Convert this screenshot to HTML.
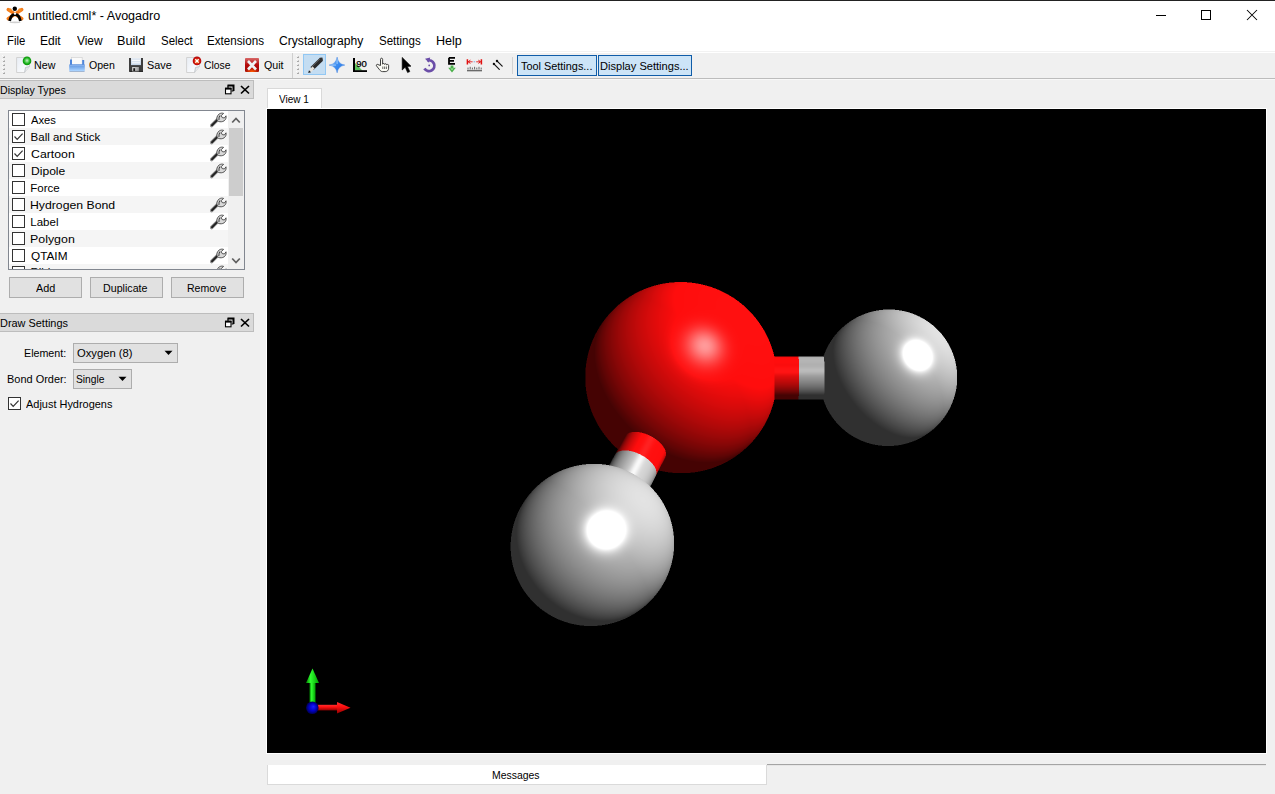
<!DOCTYPE html>
<html><head><meta charset="utf-8">
<style>
html,body{margin:0;padding:0;}
body{width:1275px;height:794px;position:relative;overflow:hidden;background:#f0f0f0;font-family:"Liberation Sans",sans-serif;color:#000;}
.a{position:absolute;}
svg.a{overflow:visible;}
.t{position:absolute;white-space:nowrap;font-size:12px;line-height:14px;transform-origin:0 0;color:#000;}
.cb{width:11px;height:11px;border:1px solid #333;background:#fff;}
.btn{position:absolute;background:#e1e1e1;border:1px solid #adadad;box-sizing:border-box;}
</style></head><body>
<svg width="0" height="0" style="position:absolute">
<defs>
<linearGradient id="wh" x1="0" y1="0" x2="1" y2="1">
<stop offset="0" stop-color="#3a3a3a"/><stop offset="1" stop-color="#111"/>
</linearGradient>
<symbol id="wrench" viewBox="0 0 17 17">
<path d="M1.6 14.6 L8.2 8.0" stroke="#9a9a9a" stroke-width="3.6" stroke-linecap="round"/>
<path d="M2.0 14.2 L7.6 8.6" stroke="#222" stroke-width="2.0" stroke-linecap="round"/>
<path d="M7.3 9.6 C6.2 7.6 7.0 4.4 9.2 3.0 C10.6 2.0 12.4 1.9 13.6 2.4 L11.2 4.6 L12.2 6.6 L14.4 7.0 L16.0 4.8 C16.4 6.6 15.8 8.6 14.2 9.8 C12.4 11.0 10.0 11.0 8.6 10.4 Z" fill="#d8d8d8" stroke="#444" stroke-width="0.9"/>
<path d="M9.0 8.8 C8.6 7.4 9.0 5.6 10.2 4.6" stroke="#333" stroke-width="1.1" fill="none"/>
</symbol>
</defs>
</svg>

<!-- ===== title bar ===== -->
<div class="a" style="left:0;top:0;width:1275px;height:1px;background:#222"></div>
<div class="a" style="left:0;top:1px;width:1275px;height:52px;background:#fff"></div>
<svg class="a" style="left:4px;top:4px" width="22" height="22" viewBox="4 4 22 22">
<ellipse cx="15" cy="22.3" rx="5.5" ry="0.9" fill="#d0d0d0"/>
<path d="M8.2 9.6 L21.8 18.6 M21.8 9.6 L8.2 18.6" stroke="#f47a1a" stroke-width="3.4" stroke-linecap="round"/>
<circle cx="10" cy="10" r="1.8" fill="#f68a20"/><circle cx="20" cy="10" r="1.8" fill="#f68a20"/>
<path d="M9.6 21 Q10.8 14.6 15 14.4 Q19.2 14.6 20.4 21" stroke="#000" stroke-width="2.8" fill="none"/>
<circle cx="14.8" cy="8.8" r="2.2" fill="#000"/>
<circle cx="15" cy="13.6" r="1.2" fill="#fff"/>
</svg>
<div class="a" style="left:1156px;top:15px;width:10px;height:1px;background:#000"></div>
<div class="a" style="left:1201px;top:10px;width:8px;height:8px;border:1px solid #000"></div>
<svg class="a" style="left:1246px;top:9px" width="12" height="12" viewBox="0 0 12 12"><path d="M1 1L11 11M11 1L1 11" stroke="#000" stroke-width="1.05"/></svg>

<!-- ===== toolbar ===== -->
<div class="a" style="left:0;top:51px;width:1275px;height:1px;background:#f2f2f2"></div>
<div class="a" style="left:0;top:53px;width:1275px;height:25px;background:#f0f0f0"></div>
<div class="a" style="left:0;top:78px;width:1275px;height:1px;background:#bcbcbc"></div>
<div class="a" style="left:0;top:79px;width:1275px;height:1px;background:#f8f8f8"></div>
<!-- grips -->
<svg class="a" style="left:2px;top:54px" width="5" height="21" viewBox="2 54 5 21"><path d="M3 58 L5 56 L5 58 Z" fill="#9c9c9c"/><rect x="3" y="57" width="2" height="1" fill="#a8a8a8"/><rect x="2" y="55" width="1" height="1" fill="#fff" opacity="0.7"/><path d="M3 62 L5 60 L5 62 Z" fill="#9c9c9c"/><rect x="3" y="61" width="2" height="1" fill="#a8a8a8"/><rect x="2" y="59" width="1" height="1" fill="#fff" opacity="0.7"/><path d="M3 66 L5 64 L5 66 Z" fill="#9c9c9c"/><rect x="3" y="65" width="2" height="1" fill="#a8a8a8"/><rect x="2" y="63" width="1" height="1" fill="#fff" opacity="0.7"/><path d="M3 70 L5 68 L5 70 Z" fill="#9c9c9c"/><rect x="3" y="69" width="2" height="1" fill="#a8a8a8"/><rect x="2" y="67" width="1" height="1" fill="#fff" opacity="0.7"/><path d="M3 74 L5 72 L5 74 Z" fill="#9c9c9c"/><rect x="3" y="73" width="2" height="1" fill="#a8a8a8"/><rect x="2" y="71" width="1" height="1" fill="#fff" opacity="0.7"/></svg>
<svg class="a" style="left:296px;top:54px" width="5" height="21" viewBox="296 54 5 21"><path d="M297 58 L299 56 L299 58 Z" fill="#9c9c9c"/><rect x="297" y="57" width="2" height="1" fill="#a8a8a8"/><rect x="296" y="55" width="1" height="1" fill="#fff" opacity="0.7"/><path d="M297 62 L299 60 L299 62 Z" fill="#9c9c9c"/><rect x="297" y="61" width="2" height="1" fill="#a8a8a8"/><rect x="296" y="59" width="1" height="1" fill="#fff" opacity="0.7"/><path d="M297 66 L299 64 L299 66 Z" fill="#9c9c9c"/><rect x="297" y="65" width="2" height="1" fill="#a8a8a8"/><rect x="296" y="63" width="1" height="1" fill="#fff" opacity="0.7"/><path d="M297 70 L299 68 L299 70 Z" fill="#9c9c9c"/><rect x="297" y="69" width="2" height="1" fill="#a8a8a8"/><rect x="296" y="67" width="1" height="1" fill="#fff" opacity="0.7"/><path d="M297 74 L299 72 L299 74 Z" fill="#9c9c9c"/><rect x="297" y="73" width="2" height="1" fill="#a8a8a8"/><rect x="296" y="71" width="1" height="1" fill="#fff" opacity="0.7"/></svg>
<div class="a" style="left:292px;top:53px;width:1px;height:25px;background:#cfcfcf"></div>
<!-- New -->
<svg class="a" style="left:12px;top:54px" width="22" height="22" viewBox="12 54 22 22">
<defs><linearGradient id="pap" x1="0" y1="0" x2="1" y2="1"><stop offset="0" stop-color="#e8edf5"/><stop offset="1" stop-color="#ffffff"/></linearGradient>
<radialGradient id="grn" cx="0.5" cy="0.5" r="0.5" fx="0.5" fy="0.45"><stop offset="0" stop-color="#d0ecd0"/><stop offset="0.35" stop-color="#6ad46a"/><stop offset="0.7" stop-color="#18b018"/><stop offset="1" stop-color="#0a900a"/></radialGradient></defs>
<path d="M16.6 57.5 H29.5 V66.5 L24.6 72.5 H16.6 Z" fill="url(#pap)" stroke="#cfcfcf" stroke-width="0.9"/>
<path d="M29.5 66.5 L25.5 67.5 L24.6 72.5" fill="#e4e6ea" stroke="#b8bcc2" stroke-width="0.8"/>
<circle cx="27" cy="60.9" r="4.3" fill="url(#grn)"/>
</svg>
<!-- Open -->
<svg class="a" style="left:66px;top:54px" width="22" height="22" viewBox="66 54 22 22">
<defs><linearGradient id="tray" x1="0" y1="0" x2="0" y2="1"><stop offset="0" stop-color="#5b8fdc"/><stop offset="0.45" stop-color="#7fb0ee"/><stop offset="0.85" stop-color="#a9d2ff"/><stop offset="1" stop-color="#7d93b5"/></linearGradient></defs>
<rect x="71.6" y="57.4" width="10.6" height="8" fill="#fafafa" stroke="#d2d2d2" stroke-width="0.7"/>
<rect x="70" y="59.5" width="2" height="6" fill="#4f86da"/>
<rect x="82.2" y="60" width="2" height="5.5" fill="#4f86da"/>
<rect x="69.2" y="64.2" width="15.6" height="7.6" rx="0.8" fill="url(#tray)"/>
<rect x="69.6" y="65.2" width="14.8" height="0.8" fill="#9cc2f2" opacity="0.7"/>
</svg>
<!-- Save -->
<svg class="a" style="left:125px;top:54px" width="22" height="22" viewBox="125 54 22 22">
<defs><linearGradient id="lbl" x1="0" y1="0" x2="0" y2="1"><stop offset="0" stop-color="#e6ecf4"/><stop offset="1" stop-color="#c4d4e6"/></linearGradient>
<linearGradient id="shut" x1="0" y1="0" x2="1" y2="0"><stop offset="0" stop-color="#e0e0e0"/><stop offset="1" stop-color="#9a9a9a"/></linearGradient></defs>
<path d="M129 57.9 H143 V72 H130 L129 71 Z" fill="#3e3e3e"/>
<rect x="131" y="58" width="10" height="7.1" fill="url(#lbl)"/>
<rect x="132" y="60.2" width="8" height="0.9" fill="#fff"/>
<rect x="132" y="62.4" width="8" height="0.9" fill="#fff"/>
<rect x="132.2" y="67" width="6.7" height="5" fill="url(#shut)"/>
<rect x="133.3" y="68.2" width="1.8" height="2.8" fill="#151515"/>
<rect x="129" y="70.8" width="14" height="1.2" fill="#1c1c1c" opacity="0.6"/>
</svg>
<!-- Close -->
<svg class="a" style="left:182px;top:54px" width="22" height="22" viewBox="182 54 22 22">
<defs><radialGradient id="rdc" cx="0.5" cy="0.5" r="0.5" fx="0.5" fy="0.6"><stop offset="0" stop-color="#ffb040"/><stop offset="0.45" stop-color="#e04010"/><stop offset="0.8" stop-color="#c80c0c"/><stop offset="1" stop-color="#a80808"/></radialGradient></defs>
<path d="M186.6 57.5 H199.5 V66.5 L194.6 72.5 H186.6 Z" fill="url(#pap)" stroke="#cfcfcf" stroke-width="0.9"/>
<path d="M199.5 66.5 L195.5 67.5 L194.6 72.5" fill="#e4e6ea" stroke="#b8bcc2" stroke-width="0.8"/>
<circle cx="197" cy="60.9" r="4.3" fill="url(#rdc)"/>
<path d="M195.3 59.2 L198.7 62.6 M198.7 59.2 L195.3 62.6" stroke="#fff" stroke-width="1.3"/>
</svg>
<!-- Quit -->
<svg class="a" style="left:241px;top:54px" width="22" height="22" viewBox="241 54 22 22">
<defs><linearGradient id="qt" x1="0" y1="0" x2="0" y2="1"><stop offset="0" stop-color="#d86a6a"/><stop offset="0.5" stop-color="#b40a0a"/><stop offset="1" stop-color="#a00808"/></linearGradient>
<radialGradient id="qo" cx="0.5" cy="0.95" r="0.5"><stop offset="0" stop-color="#ff5a00"/><stop offset="1" stop-color="#ff5a00" stop-opacity="0"/></radialGradient></defs>
<rect x="245" y="57.9" width="14" height="14" rx="0.8" fill="url(#qt)"/>
<rect x="245" y="64" width="14" height="8" fill="url(#qo)"/>
<path d="M248 61 L256 69.5 M256 61 L248 69.5" stroke="#eef2f4" stroke-width="2.6"/>
</svg>
<!-- pencil highlighted button -->
<div class="a" style="left:303px;top:54px;width:21px;height:19px;background:#c4ddf2;border:1px solid #92c8f4"></div>
<svg class="a" style="left:303px;top:54px" width="24" height="22" viewBox="303 54 24 22">
<path d="M312 68.6 L321.2 59.4" stroke="#2a2a2a" stroke-width="4.2"/>
<path d="M311.2 67.6 L320.4 58.4" stroke="#666" stroke-width="0.9"/>
<path d="M309 70.2 L312.6 66.6 L314.6 68.6 L311 72.2 Z" fill="#e6e2dc"/>
<path d="M308.2 73 L309 70.2 L311 72.2 Z" fill="#1a1a1a"/>
<path d="M319.6 57.8 L322.4 57.6 L323 60.4 L321 62 Z" fill="#333"/>
</svg>
<!-- star -->
<svg class="a" style="left:326px;top:54px" width="22" height="22" viewBox="326 54 22 22">
<defs><linearGradient id="stg" x1="0" y1="0" x2="1" y2="1"><stop offset="0" stop-color="#9fd0ff"/><stop offset="0.5" stop-color="#3d8df0"/><stop offset="1" stop-color="#1f6ee0"/></linearGradient></defs>
<path d="M337.1 57 Q338.1 64.1 344.9 65.1 Q338.1 66.1 337.1 72.9 Q336.1 66.1 329 65.1 Q336.1 64.1 337.1 57 Z" fill="url(#stg)" stroke="#3a7fe0" stroke-width="0.4"/>
<path d="M331.5 65.1 H336 M337.1 59.5 V64" stroke="#c0e0ff" stroke-width="0.9" opacity="0.8"/>
</svg>
<!-- 90 angle -->
<svg class="a" style="left:350px;top:54px" width="20" height="22" viewBox="350 54 20 22">
<path d="M354.6 62.6 L354.6 70.4 L362.4 70.4 Z" fill="#5cc25c"/>
<rect x="353" y="58" width="2" height="14" fill="#000"/>
<rect x="353" y="70.2" width="14" height="1.8" fill="#000"/>
<text x="356.2" y="67.4" font-family="Liberation Sans" font-size="9" fill="#000" stroke="#000" stroke-width="0.25" textLength="10.6" lengthAdjust="spacingAndGlyphs">90</text>
</svg>
<!-- hand -->
<svg class="a" style="left:374px;top:56px" width="18" height="18" viewBox="374 56 18 18">
<path d="M380.5 65.5 V59.3 C380.5 57.8 382.6 57.8 382.6 59.3 V64.2 C382.8 63.2 384.6 63.2 384.6 64.4 C384.8 63.5 386.6 63.5 386.6 64.8 C386.8 64.2 388.6 64.2 388.6 65.4 V68.2 C388.6 70.4 387.2 71.6 385.2 71.6 H382.4 C381.2 71.6 380.4 70.8 379.6 69.8 L376.6 66 C375.8 65 377 63.8 378 64.6 Z" fill="#fbfbf4" stroke="#2a2a2a" stroke-width="0.9"/>
<path d="M382.8 66.5 V69 M384.6 66.5 V69 M386.4 66.5 V69" stroke="#555" stroke-width="0.9"/>
</svg>
<!-- arrow -->
<svg class="a" style="left:398px;top:54px" width="16" height="22" viewBox="398 54 16 22">
<path d="M402.2 57.4 V70 L405.2 67.2 L407.6 72.6 L409.8 71.6 L407.4 66.4 L411 66.2 Z" fill="#000" stroke="#000" stroke-width="0.6" stroke-linejoin="round"/>
</svg>
<!-- rotate -->
<svg class="a" style="left:420px;top:54px" width="20" height="22" viewBox="420 54 20 22">
<path d="M427.2 60.6 A5.4 5.4 0 1 1 424.4 68.6" stroke="#6b4ea8" stroke-width="2.8" fill="none"/>
<path d="M425 58.8 L430.2 57.4 L429 62.8 Z" fill="#6b4ea8"/>
<circle cx="429.2" cy="65.4" r="0.9" fill="#6b4ea8"/>
</svg>
<!-- E arrow -->
<svg class="a" style="left:444px;top:54px" width="16" height="22" viewBox="444 54 16 22">
<path d="M449 57.8 H455 M449 57.8 V63.8 H455 M449 60.8 H454" stroke="#000" stroke-width="1.8" fill="none"/>
<path d="M450.6 65.4 H453.4 V67.8 H455.8 L452 72.4 L448.2 67.8 H450.6 Z" fill="#4ab04a"/>
<path d="M451 68.2 L452 69.8 L453 68.2" fill="none" stroke="#a8e8a8" stroke-width="0.9"/>
</svg>
<!-- measure -->
<svg class="a" style="left:464px;top:56px" width="20" height="18" viewBox="464 56 20 18">
<path d="M467.4 59.2 V64.4 M481.4 59.2 V64.4" stroke="#e01010" stroke-width="1.5"/>
<path d="M468.2 61.8 H472.6 M476.2 61.8 H480.6" stroke="#e43030" stroke-width="1"/>
<path d="M468.2 61.8 L470.4 60.2 M468.2 61.8 L470.4 63.4 M480.6 61.8 L478.4 60.2 M480.6 61.8 L478.4 63.4" stroke="#e01010" stroke-width="1"/>
<path d="M473.6 61.8 H475.2" stroke="#8aa0d8" stroke-width="1"/>
<path d="M467 70.6 H482" stroke="#6a6a6a" stroke-width="1.5"/>
<path d="M468 69.4 V67.6 M470.2 69.4 V66.8 M472.4 69.4 V67.6 M474.6 69.4 V66.8 M476.8 69.4 V67.6 M479 69.4 V66.8 M481.2 69.4 V67.6" stroke="#555" stroke-width="0.9"/>
</svg>
<!-- double line -->
<svg class="a" style="left:488px;top:56px" width="18" height="18" viewBox="488 56 18 18">
<path d="M493.6 63.6 L499.3 69.4 M496.7 60.7 L502.2 66.2" stroke="#151515" stroke-width="1.2" stroke-linecap="round"/>
<path d="M493.2 63.2 L494.6 64.6 M496.3 60.3 L497.7 61.7" stroke="#000" stroke-width="2"/>
</svg>
<div class="a" style="left:512px;top:57px;width:1px;height:17px;background:#d2d2d2"></div>
<!-- settings buttons -->
<div class="a" style="left:517px;top:55px;width:78px;height:19px;background:#cce4f7;border:1px solid #0f5ca8"></div>
<div class="a" style="left:598px;top:55px;width:92px;height:19px;background:#cce4f7;border:1px solid #0f5ca8"></div>

<!-- ===== central tab widget ===== -->
<div class="a" style="left:267px;top:88px;width:53px;height:21px;background:#fff;border:1px solid #d9d9d9;border-bottom:none"></div>
<div class="a" style="left:266px;top:108px;width:1001px;height:646px;background:#fff"></div>
<div class="a" style="left:267px;top:109px;width:999px;height:644px;background:#000;overflow:hidden">
<svg class="a" style="left:0;top:0" width="999" height="644" viewBox="267 109 999 644">
<defs>
<radialGradient id="gO" cx="0.68" cy="0.28" r="0.95" fx="0.62" fy="0.32"><stop offset="0" stop-color="#ff9a9a"/><stop offset="0.09" stop-color="#ff3030"/><stop offset="0.38" stop-color="#ff1010"/><stop offset="0.62" stop-color="#c00808"/><stop offset="0.85" stop-color="#4a0000"/><stop offset="1" stop-color="#300000"/></radialGradient>
<radialGradient id="gH1" cx="0.74" cy="0.3" r="0.95" fx="0.72" fy="0.34"><stop offset="0" stop-color="#fff"/><stop offset="0.1" stop-color="#f0f0f0"/><stop offset="0.22" stop-color="#c0c0c0"/><stop offset="0.55" stop-color="#9a9a9a"/><stop offset="0.8" stop-color="#3a3a3a"/><stop offset="1" stop-color="#222"/></radialGradient>
<radialGradient id="gH2" cx="0.62" cy="0.36" r="0.9" fx="0.57" fy="0.41"><stop offset="0" stop-color="#fff"/><stop offset="0.1" stop-color="#f4f4f4"/><stop offset="0.22" stop-color="#c8c8c8"/><stop offset="0.6" stop-color="#b0b0b0"/><stop offset="0.85" stop-color="#606060"/><stop offset="1" stop-color="#404040"/></radialGradient>
<linearGradient id="bR" x1="0" y1="0" x2="0" y2="1"><stop offset="0" stop-color="#d80a0a"/><stop offset="0.3" stop-color="#ff2020"/><stop offset="0.6" stop-color="#b00808"/><stop offset="1" stop-color="#200000"/></linearGradient>
<linearGradient id="bG" x1="0" y1="0" x2="0" y2="1"><stop offset="0" stop-color="#a8a8a8"/><stop offset="0.3" stop-color="#c8c8c8"/><stop offset="0.6" stop-color="#8a8a8a"/><stop offset="1" stop-color="#282828"/></linearGradient>
</defs>
<rect x="760" y="358" width="38" height="42" fill="url(#bR)"/><rect x="798" y="358" width="30" height="42" fill="url(#bG)"/>
<circle cx="681.8" cy="378.1" r="95" fill="url(#gO)"/>
<circle cx="888" cy="378" r="68" fill="url(#gH1)"/>
<g transform="rotate(28.3 642 452)"><rect x="621" y="434" width="42" height="22" fill="url(#bR)"/><rect x="621" y="455" width="42" height="30" fill="url(#bG)"/><ellipse cx="642" cy="434" rx="21" ry="5" fill="#ff1a1a"/></g>
<circle cx="592" cy="544.7" r="81" fill="url(#gH2)"/>
</svg>
<canvas id="mol" class="a" style="left:0;top:0" width="999" height="644"></canvas>
<script>
(function(){
var P={"amb": 0.27, "kd": 0.85, "kd2": 0.3, "L2": [0.8, -0.7, -0.5], "spec": 1.5, "shin": 60, "gr": 0.7, "s2": 1.14, "s1": 1.0, "cr": 21.3, "rH2": 80.3};
function g(k,def){return (P[k]!==undefined)?P[k]:def;}
var W=999,H=644,OX=267,OY=109;
var cv=document.getElementById('mol'); var ctx=cv.getContext('2d');
var img=ctx.createImageData(W,H); var d=img.data;
function nrm(v){var l=Math.hypot(v[0],v[1],v[2]);return [v[0]/l,v[1]/l,v[2]/l];}
function dot(a,b){return a[0]*b[0]+a[1]*b[1]+a[2]*b[2];}
var gr=g('gr',0.75);
var RED=g('red',[1.0,0.05,0.05]), GRY=[gr,gr,gr];
var L1=nrm(g('L1',[0.8,-0.7,1.0])), L2=nrm(g('L2',[-0.8,0.7,-0.5]));
var HV=nrm([L1[0],L1[1],L1[2]+1]);
var AMB=g('amb',0.2),KD=g('kd',0.8),KD2=g('kd2',0.3),SPEC=g('spec',1.0),SHIN=g('shin',50);
var D=g('D',1000), CX=766.5, CY=431;
var E=[CX,CY,D];
function place(px,py,r,s){var z=D*(1-1/s); return {c:[CX+(px-CX)/s, CY+(py-CY)/s, z], r:r/s};}
var sO=place(681.8,378.1,95,1.0), sH1=place(888,378,68,g('s1',0.969)), sH2=place(593.5,544.2,g("rH2",80.5),g("s2",1.154));
sO.col=RED; sH1.col=GRY; sH2.col=GRY;
var spheres=[sO,sH1,sH2];
function mkcyl(a,b,r){
  var p0=a.c,p1=b.c; var ax=[p1[0]-p0[0],p1[1]-p0[1],p1[2]-p0[2]]; var L=Math.hypot(ax[0],ax[1],ax[2]); ax=[ax[0]/L,ax[1]/L,ax[2]/L];
  var split=a.r+(L-a.r-b.r)/2;
  return {p0:p0,a:ax,L:L,r:r,split:split,ca:a.col,cb:b.col};
}
var CR=g('cr',21);
var cyls=[mkcyl(sO,sH1,CR), mkcyl(sO,sH2,CR)];
function shade(n,col){
  var nl=dot(n,L1); var dif=Math.max(nl,0); var dif2=Math.max(dot(n,L2),0);
  var out=[0,0,0];
  var s=0; if(nl>0){var nh=Math.max(dot(n,HV),0); s=Math.pow(nh,SHIN)*SPEC;}
  for(var i=0;i<3;i++){
    out[i]=col[i]*AMB + col[i]*KD*dif + col[i]*KD2*dif2 + g('sm',1)*((2*col[i]+1)/3)*s + (1-g('sm',1))*s;
  }
  return out;
}
function sample(x,y){
  var v=nrm([x-E[0],y-E[1],-E[2]]);
  var bt=1e18, bn=null, bc=null;
  for(var k=0;k<spheres.length;k++){var s=spheres[k];
    var oc=[E[0]-s.c[0],E[1]-s.c[1],E[2]-s.c[2]]; var b=dot(oc,v); var c=dot(oc,oc)-s.r*s.r; var disc=b*b-c; if(disc<0) continue;
    var t=-b-Math.sqrt(disc); if(t<bt){bt=t; var p=[E[0]+t*v[0],E[1]+t*v[1],E[2]+t*v[2]]; bn=[(p[0]-s.c[0])/s.r,(p[1]-s.c[1])/s.r,(p[2]-s.c[2])/s.r]; bc=s.col;}
  }
  for(var k=0;k<cyls.length;k++){var c=cyls[k];
    var w=[E[0]-c.p0[0],E[1]-c.p0[1],E[2]-c.p0[2]]; var wa=dot(w,c.a), va=dot(v,c.a);
    var wp=[w[0]-wa*c.a[0],w[1]-wa*c.a[1],w[2]-wa*c.a[2]], vp=[v[0]-va*c.a[0],v[1]-va*c.a[1],v[2]-va*c.a[2]];
    var A=dot(vp,vp), B=2*dot(wp,vp), C=dot(wp,wp)-c.r*c.r; var disc=B*B-4*A*C; if(disc<0) continue;
    var t=(-B-Math.sqrt(disc))/(2*A); if(t>=bt) continue;
    var ax=wa+t*va; if(ax<0||ax>c.L) continue;
    bt=t; bn=nrm([wp[0]+t*vp[0],wp[1]+t*vp[1],wp[2]+t*vp[2]]); bc=(ax<c.split)?c.ca:c.cb;
  }
  if(!bn) return null;
  return shade(bn,bc);
}
var SS=[[0.25,0.25],[0.75,0.25],[0.25,0.75],[0.75,0.75]];
var x0=480-OX,x1=990-OX,y0=250-OY,y1=660-OY;
for(var py=0;py<H;py++){for(var px=0;px<W;px++){var i=(py*W+px)*4; d[i+3]=255;}}
for(var py=y0;py<y1;py++){for(var px=x0;px<x1;px++){
  var r=0,gg=0,b=0;
  for(var s=0;s<4;s++){var o=sample(px+OX+SS[s][0],py+OY+SS[s][1]); if(o){r+=Math.min(o[0],1);gg+=Math.min(o[1],1);b+=Math.min(o[2],1);}}
  var i=(py*W+px)*4; d[i]=r/4*255; d[i+1]=gg/4*255; d[i+2]=b/4*255;
}}
ctx.putImageData(img,0,0);
})();

</script>
<svg class="a" style="left:0;top:0" width="999" height="644" viewBox="267 109 999 644">
<defs>
<linearGradient id="axG" x1="0" y1="0" x2="1" y2="0"><stop offset="0" stop-color="#008000"/><stop offset="0.35" stop-color="#30ff30"/><stop offset="1" stop-color="#00a000"/></linearGradient>
<linearGradient id="axR" x1="0" y1="0" x2="0" y2="1"><stop offset="0" stop-color="#ff3030"/><stop offset="0.4" stop-color="#ff1010"/><stop offset="1" stop-color="#900000"/></linearGradient>
<radialGradient id="axB" cx="0.5" cy="0.5" r="0.5" fx="0.6" fy="0.4"><stop offset="0" stop-color="#1a1aff"/><stop offset="0.6" stop-color="#0000c0"/><stop offset="1" stop-color="#000050"/></radialGradient>
</defs>
<rect x="309.5" y="681" width="6" height="22" fill="url(#axG)"/>
<path d="M312.5 668.5 L319 683 L306 683 Z" fill="url(#axG)"/>
<rect x="317" y="704.8" width="21" height="5.6" fill="url(#axR)"/>
<path d="M350.5 707.8 L337 702 L337 713.6 Z" fill="url(#axR)"/>
<circle cx="312.3" cy="707.8" r="6.3" fill="url(#axB)"/>
</svg>

</div>

<!-- ===== messages ===== -->
<div class="a" style="left:767px;top:764px;width:499px;height:1px;background:#a4a4a4"></div>
<div class="a" style="left:767px;top:765px;width:499px;height:1px;background:#e6e6e6"></div>
<div class="a" style="left:267px;top:765px;width:498px;height:19px;background:#fff;border-left:1px solid #dadada;border-bottom:1px solid #dadada;border-right:1px solid #dadada"></div>

<!-- ===== dock 1: Display Types ===== -->
<div class="a" style="left:0;top:80px;width:253px;height:17px;background:#dadada;border:1px solid #bdbdbd;border-left:none"></div>
<svg class="a" style="left:224px;top:84px" width="11" height="11" viewBox="0 0 11 11"><use href="#floatic"/></svg>
<svg class="a" style="left:240px;top:85px" width="10" height="10" viewBox="0 0 10 10"><path d="M1 1L9 8.5M9 1L1 8.5" stroke="#000" stroke-width="1.7"/></svg>
<div class="a" style="left:8px;top:110px;width:235px;height:158px;background:#fff;border:1px solid #828790"></div>
<div class="a" style="left:9px;top:111px;width:219px;height:158px;overflow:hidden">
<div class="a" style="left:0px;top:0px;width:219px;height:17px;background:#fff"></div>
<div class="a cb" style="left:3px;top:2px"></div>
<svg class="a" style="left:201px;top:0px" width="17" height="17" viewBox="0 0 17 17"><use href="#wrench"/></svg>
<div class="a" style="left:0px;top:17px;width:219px;height:17px;background:#f5f5f5"></div>
<div class="a cb" style="left:3px;top:19px"></div>
<svg class="a" style="left:3px;top:19px" width="13" height="13"><path d="M2.5 6.5L5.2 9.3L10.6 3.6" fill="none" stroke="#333" stroke-width="1.2"/></svg>
<svg class="a" style="left:201px;top:17px" width="17" height="17" viewBox="0 0 17 17"><use href="#wrench"/></svg>
<div class="a" style="left:0px;top:34px;width:219px;height:17px;background:#fff"></div>
<div class="a cb" style="left:3px;top:36px"></div>
<svg class="a" style="left:3px;top:36px" width="13" height="13"><path d="M2.5 6.5L5.2 9.3L10.6 3.6" fill="none" stroke="#333" stroke-width="1.2"/></svg>
<svg class="a" style="left:201px;top:34px" width="17" height="17" viewBox="0 0 17 17"><use href="#wrench"/></svg>
<div class="a" style="left:0px;top:51px;width:219px;height:17px;background:#f5f5f5"></div>
<div class="a cb" style="left:3px;top:53px"></div>
<svg class="a" style="left:201px;top:51px" width="17" height="17" viewBox="0 0 17 17"><use href="#wrench"/></svg>
<div class="a" style="left:0px;top:68px;width:219px;height:17px;background:#fff"></div>
<div class="a cb" style="left:3px;top:70px"></div>
<div class="a" style="left:0px;top:85px;width:219px;height:17px;background:#f5f5f5"></div>
<div class="a cb" style="left:3px;top:87px"></div>
<svg class="a" style="left:201px;top:85px" width="17" height="17" viewBox="0 0 17 17"><use href="#wrench"/></svg>
<div class="a" style="left:0px;top:102px;width:219px;height:17px;background:#fff"></div>
<div class="a cb" style="left:3px;top:104px"></div>
<svg class="a" style="left:201px;top:102px" width="17" height="17" viewBox="0 0 17 17"><use href="#wrench"/></svg>
<div class="a" style="left:0px;top:119px;width:219px;height:17px;background:#f5f5f5"></div>
<div class="a cb" style="left:3px;top:121px"></div>
<div class="a" style="left:0px;top:136px;width:219px;height:17px;background:#fff"></div>
<div class="a cb" style="left:3px;top:138px"></div>
<svg class="a" style="left:201px;top:136px" width="17" height="17" viewBox="0 0 17 17"><use href="#wrench"/></svg>
<div class="a" style="left:0px;top:153px;width:219px;height:17px;background:#f5f5f5"></div>
<div class="a cb" style="left:3px;top:155px"></div>
<svg class="a" style="left:201px;top:153px" width="17" height="17" viewBox="0 0 17 17"><use href="#wrench"/></svg>
<div class="t" style="left:21.5px;top:154px;font-size:11.5px">Ribbon</div>
</div>
<div class="a" style="left:228px;top:111px;width:16px;height:158px;background:#f0f0f0"></div>
<div class="a" style="left:229px;top:128px;width:14px;height:68px;background:#cdcdcd"></div>
<svg class="a" style="left:231px;top:116px" width="10" height="8" viewBox="0 0 10 8"><path d="M1.2 6.5 L5 2.5 L8.8 6.5" stroke="#606060" stroke-width="1.8" fill="none"/></svg>
<svg class="a" style="left:231px;top:257px" width="10" height="8" viewBox="0 0 10 8"><path d="M1.2 1.5 L5 5.5 L8.8 1.5" stroke="#606060" stroke-width="1.8" fill="none"/></svg>
<div class="btn" style="left:9px;top:277px;width:73px;height:21px"></div>
<div class="btn" style="left:90px;top:277px;width:73px;height:21px"></div>
<div class="btn" style="left:171px;top:277px;width:73px;height:21px"></div>

<!-- ===== dock 2: Draw Settings ===== -->
<div class="a" style="left:0;top:313px;width:253px;height:17px;background:#dadada;border:1px solid #bdbdbd;border-left:none"></div>
<svg class="a" style="left:224px;top:317px" width="11" height="11" viewBox="0 0 11 11"><use href="#floatic"/></svg>
<svg class="a" style="left:240px;top:318px" width="10" height="10" viewBox="0 0 10 10"><path d="M1 1L9 8.5M9 1L1 8.5" stroke="#000" stroke-width="1.7"/></svg>
<div class="btn" style="left:73px;top:343px;width:105px;height:20px"></div>
<svg class="a" style="left:164px;top:350px" width="10" height="6"><path d="M0.5 0.8 H8.5 L4.5 5 Z" fill="#000"/></svg>
<div class="btn" style="left:73px;top:369px;width:59px;height:20px"></div>
<svg class="a" style="left:118px;top:376px" width="10" height="6"><path d="M0.5 0.8 H8.5 L4.5 5 Z" fill="#000"/></svg>
<div class="a cb" style="left:8px;top:397px"></div>
<svg class="a" style="left:8px;top:397px" width="13" height="13"><path d="M2.5 6.5L5.2 9.3L10.6 3.6" fill="none" stroke="#333" stroke-width="1.2"/></svg>

<svg width="0" height="0" style="position:absolute"><defs>
<symbol id="floatic" viewBox="0 0 11 11">
<path d="M3.5 1.5 H9.5 V7" stroke="#000" stroke-width="2" fill="none"/>
<path d="M4 1.5 V4 M9.5 7 H7.5" stroke="#000" stroke-width="1.2" fill="none"/>
<rect x="1.5" y="4.5" width="5.5" height="5.3" fill="#fff" stroke="#000" stroke-width="1.1"/>
<path d="M1 4.6 H7.5" stroke="#000" stroke-width="2"/>
</symbol>
</defs></svg>

<div class="t" style="left:27.66px;top:9px;font-size:12px;transform:scaleX(1.0448)">untitled.cml* - Avogadro</div>
<div class="t" style="left:6.56px;top:34px;font-size:12px;transform:scaleX(0.9444)">File</div>
<div class="t" style="left:40.0px;top:34px;font-size:12px">Edit</div>
<div class="t" style="left:76.8px;top:34px;font-size:12px;transform:scaleX(0.9923)">View</div>
<div class="t" style="left:117.14px;top:34px;font-size:12px;transform:scaleX(1.056)">Build</div>
<div class="t" style="left:160.55px;top:34px;font-size:12px;transform:scaleX(0.9531)">Select</div>
<div class="t" style="left:207.43px;top:34px;font-size:12px;transform:scaleX(0.9702)">Extensions</div>
<div class="t" style="left:279.19px;top:34px;font-size:12px;transform:scaleX(1.0098)">Crystallography</div>
<div class="t" style="left:378.84px;top:34px;font-size:12px;transform:scaleX(0.9619)">Settings</div>
<div class="t" style="left:436.35px;top:34px;font-size:12px;transform:scaleX(1.0478)">Help</div>
<div class="t" style="left:33.67px;top:58px;font-size:11.5px;transform:scaleX(0.9273)">New</div>
<div class="t" style="left:88.6px;top:58px;font-size:11.5px;transform:scaleX(0.9179)">Open</div>
<div class="t" style="left:146.66px;top:58px;font-size:11.5px;transform:scaleX(0.944)">Save</div>
<div class="t" style="left:203.8px;top:58px;font-size:11.5px;transform:scaleX(0.9036)">Close</div>
<div class="t" style="left:263.5px;top:58px;font-size:11.5px;transform:scaleX(0.9286)">Quit</div>
<div class="t" style="left:520.5px;top:59px;font-size:11.5px;transform:scaleX(0.9467)">Tool Settings...</div>
<div class="t" style="left:599.84px;top:59px;font-size:11.5px;transform:scaleX(0.9633)">Display Settings...</div>
<div class="t" style="left:278.8px;top:92px;font-size:11px;transform:scaleX(0.9125)">View 1</div>
<div class="t" style="left:491.75px;top:768px;font-size:11px;transform:scaleX(0.949)">Messages</div>
<div class="t" style="left:-0.16px;top:83px;font-size:11px;transform:scaleX(0.9627)">Display Types</div>
<div class="t" style="left:-0.49px;top:316px;font-size:11px;transform:scaleX(0.9925)">Draw Settings</div>
<div class="t" style="left:31.0px;top:113px;font-size:11.5px;transform:scaleX(0.976)">Axes</div>
<div class="t" style="left:30.6px;top:130px;font-size:11.5px">Ball and Stick</div>
<div class="t" style="left:30.53px;top:147px;font-size:11.5px;transform:scaleX(1.0692)">Cartoon</div>
<div class="t" style="left:30.55px;top:164px;font-size:11.5px;transform:scaleX(1.0516)">Dipole</div>
<div class="t" style="left:30.3px;top:181px;font-size:11.5px">Force</div>
<div class="t" style="left:30.23px;top:198px;font-size:11.5px;transform:scaleX(1.0654)">Hydrogen Bond</div>
<div class="t" style="left:30.3px;top:215px;font-size:11.5px">Label</div>
<div class="t" style="left:30.22px;top:232px;font-size:11.5px;transform:scaleX(1.0775)">Polygon</div>
<div class="t" style="left:31.3px;top:249px;font-size:11.5px;transform:scaleX(1.0257)">QTAIM</div>
<div class="t" style="left:35.8px;top:281px;font-size:11.5px;transform:scaleX(0.94)">Add</div>
<div class="t" style="left:102.77px;top:281px;font-size:11.5px;transform:scaleX(0.9277)">Duplicate</div>
<div class="t" style="left:186.78px;top:281px;font-size:11.5px;transform:scaleX(0.9167)">Remove</div>
<div class="t" style="left:23.77px;top:346px;font-size:11.5px;transform:scaleX(0.9295)">Element:</div>
<div class="t" style="left:76.6px;top:346px;font-size:11.5px;transform:scaleX(0.9768)">Oxygen (8)</div>
<div class="t" style="left:6.55px;top:372px;font-size:11.5px;transform:scaleX(0.9525)">Bond Order:</div>
<div class="t" style="left:75.71px;top:372px;font-size:11.5px;transform:scaleX(0.8903)">Single</div>
<div class="t" style="left:25.8px;top:397px;font-size:11.5px;transform:scaleX(0.9522)">Adjust Hydrogens</div>
</body></html>
